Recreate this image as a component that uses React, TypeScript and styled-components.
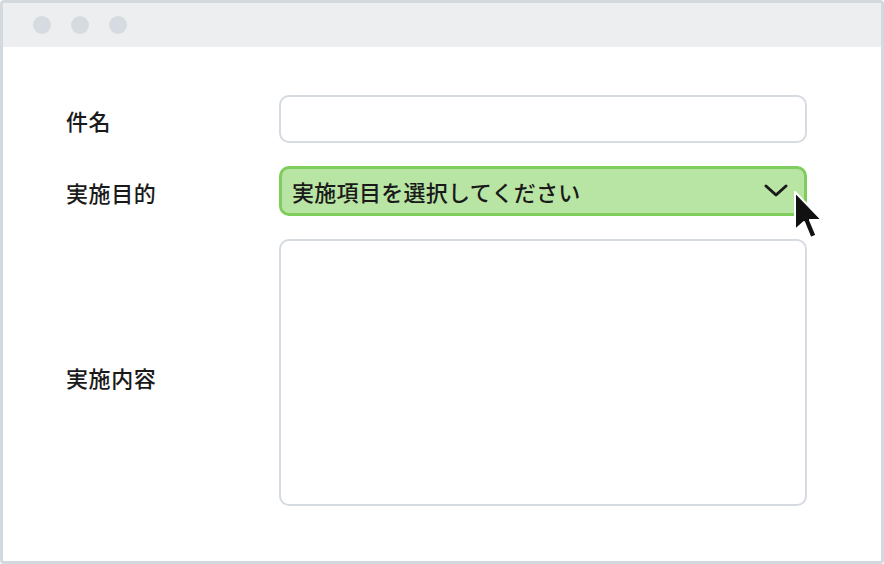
import React from "react";
import styled, { createGlobalStyle } from "styled-components";

const Global = createGlobalStyle`
  html, body { margin: 0; padding: 0; background: #ffffff; }
  body { font-family: "Noto Sans CJK JP", "Noto Sans", sans-serif; }
  * { box-sizing: border-box; }
`;

const Window = styled.div`
  width: 884px;
  height: 564px;
  border: 3px solid #d3dadf;
  border-radius: 4px;
  background: #ffffff;
  display: flex;
  flex-direction: column;
  overflow: hidden;
`;

const TitleBar = styled.div`
  height: 44px;
  background: #eceef0;
  display: flex;
  align-items: center;
  gap: 20px;
  padding-left: 30px;
  padding-bottom: 1px;
`;

const Dot = styled.span`
  width: 18px;
  height: 18px;
  border-radius: 50%;
  background: #d5dbe0;
`;

const Form = styled.div`
  display: grid;
  grid-template-columns: 213px 528px;
  row-gap: 24px;
  padding: 48px 0 0 63px;
  align-items: center;
`;

const Label = styled.div<{ $offset?: number }>`
  font-size: 22px;
  font-weight: 500;
  color: #1a1a1a;
  letter-spacing: 0.6px;
  margin-top: ${(p) => p.$offset ?? 1}px;
`;

const TextInput = styled.div`
  height: 48px;
  border: 2.5px solid #d5dbe0;
  border-radius: 10px;
  background: #ffffff;
`;

const SelectWrap = styled.div`
  position: relative;
  height: 50px;
  margin-top: -1px;
`;

const Select = styled.div`
  height: 50px;
  border: 3px solid #7fcd5c;
  border-radius: 10px;
  background: #b9e5a4;
  display: flex;
  align-items: center;
  justify-content: space-between;
  padding: 0 16px 0 10px;
  font-size: 22px;
  font-weight: 500;
  color: #1a1a1a;
  letter-spacing: 0.3px;
`;

const Cursor = styled.svg`
  position: absolute;
  left: 514px;
  top: 25px;
`;

const TextArea = styled.div`
  height: 267px;
  border: 2.5px solid #d5dbe0;
  border-radius: 10px;
  background: #ffffff;
  margin-top: -1px;
`;

export default function App() {
  return (
    <>
      <Global />
      <Window>
        <TitleBar>
          <Dot />
          <Dot />
          <Dot />
        </TitleBar>
        <Form>
          <Label>件名</Label>
          <TextInput />
          <Label>実施目的</Label>
          <SelectWrap>
            <Select>
              <span>実施項目を選択してください</span>
              <svg width="24" height="14" viewBox="0 0 24 14">
                <path d="M2 2 L12 11 L22 2" fill="none" stroke="#1a1a1a" strokeWidth="3" strokeLinecap="round" strokeLinejoin="round" />
              </svg>
            </Select>
            <Cursor width="32" height="50" viewBox="0 0 32 50">
              <path
                d="M2 1 L2 39 L11 31 L17.5 47 L23.5 44.5 L17 29 L29 29 Z"
                fill="#111111"
                stroke="#ffffff"
                strokeWidth="2"
                strokeLinejoin="round"
              />
            </Cursor>
          </SelectWrap>
          <Label $offset={8}>実施内容</Label>
          <TextArea />
        </Form>
      </Window>
    </>
  );
}
